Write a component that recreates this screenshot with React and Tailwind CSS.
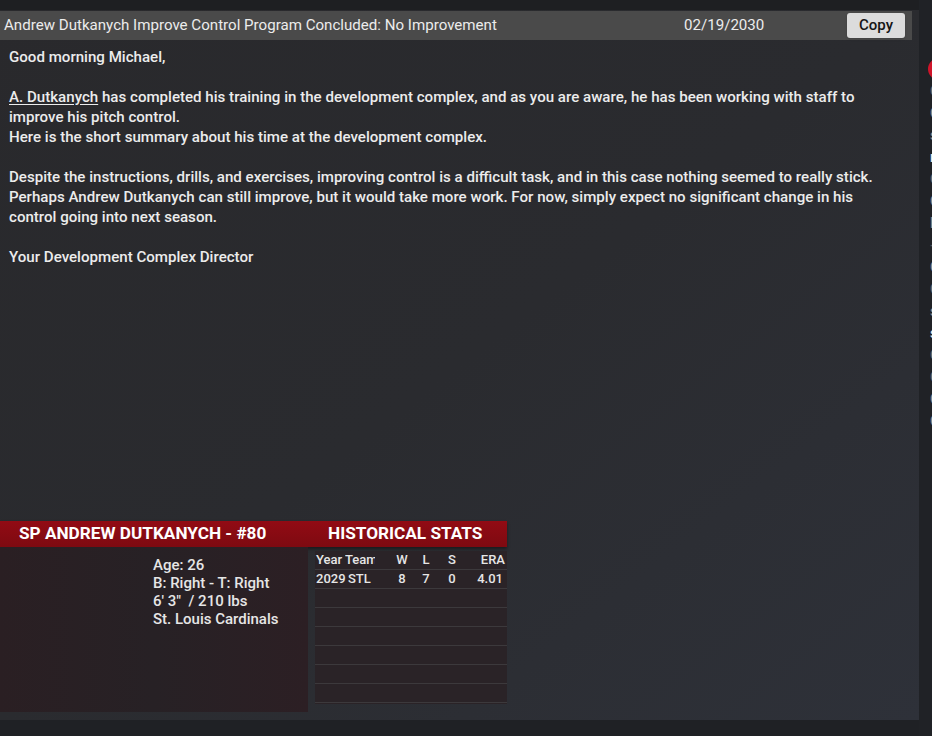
const stats = [
  { year: '2029', team: 'STL', w: '8', l: '7', s: '0', era: '4.01' },
];

const sideItems = [
  { t: 'O', c: 'text-[#6a6c70]' },
  { t: 'C', c: 'text-[#8a8c90]' },
  { t: 's', c: 'text-[#8a8c90]' },
  { t: 'n', c: 'text-[#e8e8e8]' },
  { t: 'O', c: 'text-[#6a6c70]' },
  { t: 'C', c: 'text-[#8a8c90]' },
  { t: 'l', c: 'text-[#8a8c90]' },
  { t: '-', c: 'text-[#55575b]' },
  { t: 'C', c: 'text-[#8a8c90]' },
  { t: 'C', c: 'text-[#6a6c70]' },
  { t: 's', c: 'text-[#8a8c90]' },
  { t: 's', c: 'text-[#e8e8e8]' },
  { t: 'O', c: 'text-[#6a6c70]' },
  { t: 'C', c: 'text-[#6a6c70]' },
  { t: 'C', c: 'text-[#8a8c90]' },
  { t: 'C', c: 'text-[#8a8c90]' },
];

function StatsTable() {
  const empty = Array.from({ length: 6 });
  return (
    <div className="w-[192px] mt-[4px] mb-[8px] ml-[7px] bg-[#2a2327] text-[13px] font-medium text-[#e6e6e6]">
      <div className="flex h-[19px] items-center border-b border-[#3c393c] pl-[1px]">
        <span className="w-[29px]">Year</span>
        <span className="w-[30px] overflow-hidden whitespace-nowrap">Team</span>
        <span className="w-[24px] ml-[15px] text-center">W</span>
        <span className="w-[24px] text-center">L</span>
        <span className="w-[28px] text-center">S</span>
        <span className="flex-1 text-right pr-[2px]">ERA</span>
      </div>
      {stats.map((r) => (
        <div key={r.year} className="flex h-[19px] items-center border-b border-[#3c393c] pl-[1px]">
          <span className="w-[32px]">{r.year}</span>
          <span className="w-[27px] overflow-hidden whitespace-nowrap">{r.team}</span>
          <span className="w-[24px] ml-[15px] text-center">{r.w}</span>
          <span className="w-[24px] text-center">{r.l}</span>
          <span className="w-[28px] text-center">{r.s}</span>
          <span className="flex-1 text-right pr-[4px]">{r.era}</span>
        </div>
      ))}
      {empty.map((_, i) => (
        <div key={i} className="h-[19px] border-b border-[#3c393c]" />
      ))}
    </div>
  );
}

export default function App() {
  return (
    <div
      className="w-[932px] h-[736px] overflow-hidden flex bg-[#1f2125] text-[#e8e8e8]"
      style={{ fontFamily: 'Roboto, "Noto Sans", sans-serif' }}
    >
      {/* main message panel */}
      <div className="w-[919px] shrink-0 flex flex-col">
        <div className="h-[10px] bg-[#1e1f22]" />
        <div className="h-[710px] flex flex-col bg-gradient-to-br from-[#29292c] via-[#2a2b2f] to-[#2e3139]">
          <div className="h-[29px] w-[912px] mt-[1px] flex items-center bg-[#4a4a4a] text-[15.1px]">
            <span className="pl-[4px] w-[684px] text-[#ececec]">
              Andrew Dutkanych Improve Control Program Concluded: No Improvement
            </span>
            <span className="text-[#ececec]">02/19/2030</span>
            <button className="ml-auto mr-[7px] h-[25px] w-[58px] rounded-[3px] bg-[#dcdcdc] text-[#151515] text-[15px] font-medium shadow-sm">
              Copy
            </button>
          </div>

          <div className="pl-[9px] pt-[7px] pr-[25px] text-[15.1px] font-medium leading-[20px] text-[#ececec]">
            <p>Good morning Michael,</p>
            <p className="mt-[20px]">
              <span className="underline underline-offset-2">A. Dutkanych</span> has completed his training in the
              development complex, and as you are aware, he has been working with staff to improve his pitch control.
            </p>
            <p>Here is the short summary about his time at the development complex.</p>
            <p className="mt-[20px]">
              Despite the instructions, drills, and exercises, improving control is a difficult task, and in this case
              nothing seemed to really stick. Perhaps Andrew Dutkanych can still improve, but it would take more work.
              For now, simply expect no significant change in his control going into next season.
            </p>
            <p className="mt-[20px]">Your Development Complex Director</p>
          </div>

          {/* player card */}
          <div className="mt-auto mb-[8px] w-[507px] flex flex-col">
            <div className="h-[26px] flex items-center bg-gradient-to-b from-[#920b14] to-[#7e0a11] text-white text-[17.2px] font-bold shadow-[0_2px_3px_rgba(0,0,0,0.4)]">
              <span className="pl-[19px] w-[328px]">SP ANDREW DUTKANYCH - #80</span>
              <span>HISTORICAL STATS</span>
            </div>
            <div className="flex h-[165px]">
              <div className="w-[308px] bg-gradient-to-r from-[#2a1f23] via-[#272125] to-[#2c1f24] pl-[153px] pt-[9px] text-[15px] font-medium leading-[18px] text-[#e6e6e6]">
                <div>Age: 26</div>
                <div>B: Right - T: Right</div>
                <div>6' 3"&nbsp; / 210 lbs</div>
                <div>St. Louis Cardinals</div>
              </div>
              <StatsTable />
            </div>
          </div>
        </div>
      </div>

      {/* right sidebar, clipped by the window */}
      <div className="flex-1 bg-[#202226] pt-[58px] pl-[9px] flex flex-col text-[15px] font-medium leading-[22px]">
        <div className="w-[22px] h-[22px] rounded-full bg-[#d0142a] shrink-0" />
        {sideItems.map((it, i) => (
          <div key={i} className={'whitespace-nowrap pl-[2px] ' + it.c}>
            {it.t}
          </div>
        ))}
      </div>
    </div>
  );
}
